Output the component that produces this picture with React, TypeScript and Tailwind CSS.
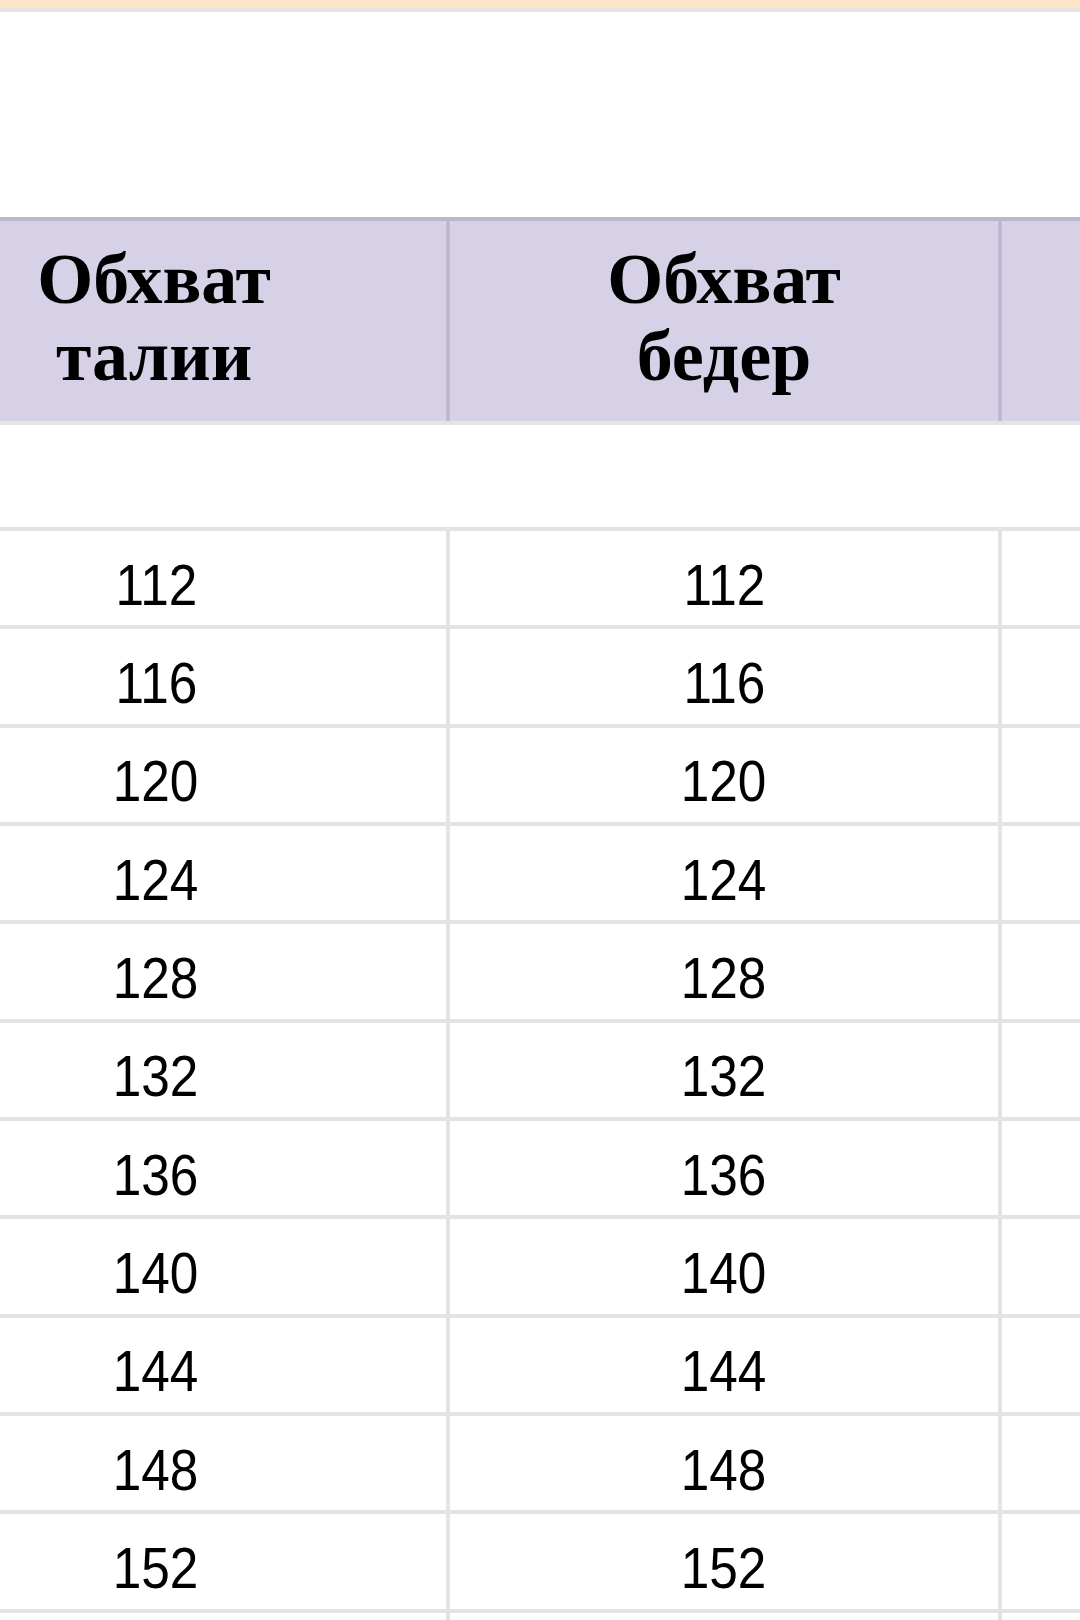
import React from "react";

const values = [112, 116, 120, 124, 128, 132, 136, 140, 144, 148, 152];

export default function App() {
  return (
    <div className="w-[1080px] h-[1620px] overflow-hidden bg-white">
      <div className="h-[8px] bg-[#fde5cc]" />
      <div className="h-[4px] bg-[#e3e3e3]" />
      <div className="h-[205px]" />
      <div className="ml-[-138px] w-[1400px]">
        {/* header */}
        <div className="flex h-[208px] border-t-4 border-b-4 border-t-[#bcb6d1] border-b-[#e4e4e4] bg-[#d7d1e8] text-black font-bold text-[72px] leading-[77px] [font-family:'Liberation_Serif',serif]">
          <div className="w-[588px] shrink-0 border-r-4 border-[#bfb8d3] flex flex-col items-center justify-center pb-[6px]">
            <span>Обхват</span>
            <span>талии</span>
          </div>
          <div className="w-[552px] shrink-0 border-r-4 border-[#bfb8d3] flex flex-col items-center justify-center pb-[6px]">
            <span>Обхват</span>
            <span>бедер</span>
          </div>
          <div className="flex-1" />
        </div>
        {/* blank row */}
        <div className="h-[102px]" />
        {/* data rows */}
        {values.map((v) => (
          <div
            key={v}
            className="flex h-[98.35px] border-t-4 border-[#e3e3e3] text-black text-[57px] leading-none [font-family:'Liberation_Sans',Arial,sans-serif]"
          >
            <div className="w-[588px] shrink-0 border-r-4 border-[#e3e3e3] flex items-center justify-center pt-[14px] pl-[4px]">
              <span className="inline-block scale-x-[0.9]">{v}</span>
            </div>
            <div className="w-[552px] shrink-0 border-r-4 border-[#e3e3e3] flex items-center justify-center pt-[14px]">
              <span className="inline-block scale-x-[0.9]">{v}</span>
            </div>
            <div className="flex-1" />
          </div>
        ))}
        <div className="flex h-[98.35px] border-t-4 border-[#e3e3e3]">
          <div className="w-[588px] shrink-0 border-r-4 border-[#e3e3e3]" />
          <div className="w-[552px] shrink-0 border-r-4 border-[#e3e3e3]" />
          <div className="flex-1" />
        </div>
      </div>
    </div>
  );
}
